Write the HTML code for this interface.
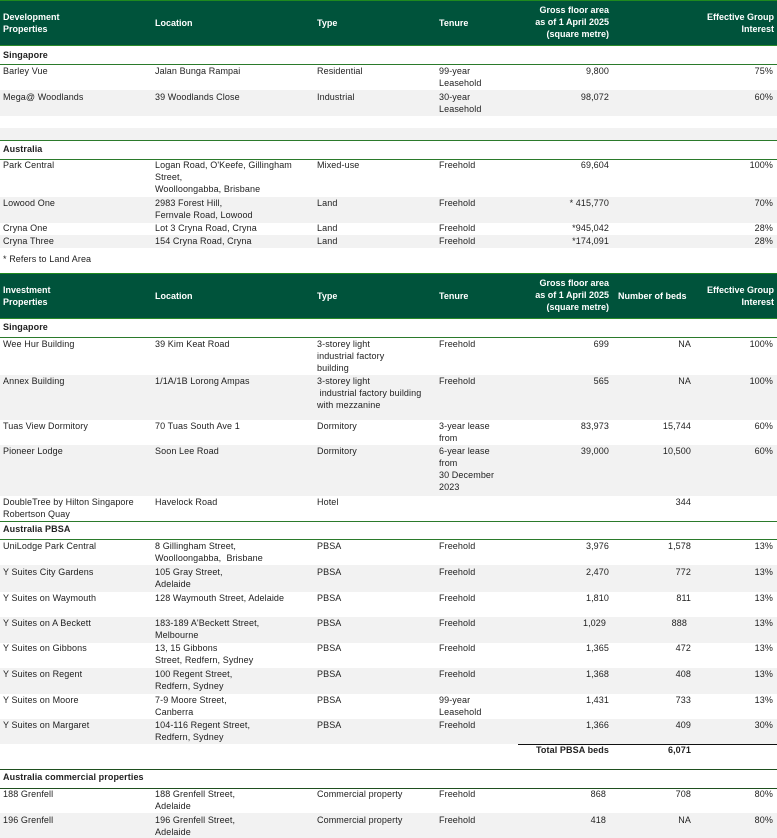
<!DOCTYPE html>
<html><head><meta charset="utf-8"><style>
*{margin:0;padding:0;box-sizing:border-box}
body{width:777px;height:838px;position:relative;background:#fff;font-family:"Liberation Sans",Arial,sans-serif;font-size:9px;color:#222;overflow:hidden}
div{position:absolute}
.t{line-height:12px;white-space:nowrap;letter-spacing:0.1px}
.r{text-align:right}
.b{font-weight:bold}
.h{background:#00533b;color:#fff;font-weight:bold}
.hl{color:#fff;font-weight:bold;line-height:12px;white-space:nowrap}
.g{background:#f2f2f2;left:0;width:777px}
.ln{left:0;width:777px;height:1px;background:#2b7a2b}
</style></head><body>

<!-- Header 1 -->
<div class="h" style="left:0;top:0;width:777px;height:46px"></div>
<div style="left:0;top:0;width:153px;height:1px;background:#1f8a1f"></div>
<div style="left:128px;top:0;width:649px;height:1px;background:#1f8a1f"></div>
<div style="left:0;top:45px;width:777px;height:1px;background:#2b8a2b"></div>
<div class="hl" style="left:3px;top:11px">Development<br>Properties</div>
<div class="hl" style="left:155px;top:17px">Location</div>
<div class="hl" style="left:317px;top:17px">Type</div>
<div class="hl" style="left:439px;top:17px">Tenure</div>
<div class="hl r" style="right:168px;top:4px">Gross floor area<br>as of 1 April 2025<br>(square metre)</div>
<div class="hl r" style="right:3px;top:11px">Effective Group<br>Interest</div>

<div class="t b" style="left:3px;top:49px">Singapore</div>
<div class="ln" style="top:64px"></div>

<div class="t" style="left:3px;top:65px">Barley Vue</div>
<div class="t" style="left:155px;top:65px">Jalan Bunga Rampai</div>
<div class="t" style="left:317px;top:65px">Residential</div>
<div class="t" style="left:439px;top:65px">99-year<br>Leasehold</div>
<div class="t r" style="right:168px;top:65px">9,800</div>
<div class="t r" style="right:4px;top:65px">75%</div>

<div class="g" style="top:90px;height:26px"></div>
<div class="t" style="left:3px;top:91px">Mega@ Woodlands</div>
<div class="t" style="left:155px;top:91px">39 Woodlands Close</div>
<div class="t" style="left:317px;top:91px">Industrial</div>
<div class="t" style="left:439px;top:91px">30-year<br>Leasehold</div>
<div class="t r" style="right:168px;top:91px">98,072</div>
<div class="t r" style="right:4px;top:91px">60%</div>

<div class="g" style="top:128px;height:12px"></div>
<div class="ln" style="top:140px"></div>
<div class="t b" style="left:3px;top:143px">Australia</div>
<div class="ln" style="top:159px"></div>

<div class="t" style="left:3px;top:159px">Park Central</div>
<div class="t" style="left:155px;top:159px">Logan Road, O'Keefe, Gillingham<br>Street,<br>Woolloongabba, Brisbane</div>
<div class="t" style="left:317px;top:159px">Mixed-use</div>
<div class="t" style="left:439px;top:159px">Freehold</div>
<div class="t r" style="right:168px;top:159px">69,604</div>
<div class="t r" style="right:4px;top:159px">100%</div>

<div class="g" style="top:197px;height:26px"></div>
<div class="t" style="left:3px;top:197px">Lowood One</div>
<div class="t" style="left:155px;top:197px">2983 Forest Hill,<br>Fernvale Road, Lowood</div>
<div class="t" style="left:317px;top:197px">Land</div>
<div class="t" style="left:439px;top:197px">Freehold</div>
<div class="t r" style="right:168px;top:197px">* 415,770</div>
<div class="t r" style="right:4px;top:197px">70%</div>

<div class="t" style="left:3px;top:222px">Cryna One</div>
<div class="t" style="left:155px;top:222px">Lot 3 Cryna Road, Cryna</div>
<div class="t" style="left:317px;top:222px">Land</div>
<div class="t" style="left:439px;top:222px">Freehold</div>
<div class="t r" style="right:168px;top:222px">*945,042</div>
<div class="t r" style="right:4px;top:222px">28%</div>

<div class="g" style="top:235px;height:13px"></div>
<div class="t" style="left:3px;top:235px">Cryna Three</div>
<div class="t" style="left:155px;top:235px">154 Cryna Road, Cryna</div>
<div class="t" style="left:317px;top:235px">Land</div>
<div class="t" style="left:439px;top:235px">Freehold</div>
<div class="t r" style="right:168px;top:235px">*174,091</div>
<div class="t r" style="right:4px;top:235px">28%</div>

<div class="t" style="left:3px;top:253px">* Refers to Land Area</div>

<!-- Header 2 -->
<div class="h" style="left:0;top:273px;width:777px;height:46px"></div>
<div style="left:0;top:273px;width:777px;height:1px;background:#1f8a1f"></div>
<div style="left:0;top:318px;width:777px;height:1px;background:#2b8a2b"></div>
<div class="hl" style="left:3px;top:284px">Investment<br>Properties</div>
<div class="hl" style="left:155px;top:290px">Location</div>
<div class="hl" style="left:317px;top:290px">Type</div>
<div class="hl" style="left:439px;top:290px">Tenure</div>
<div class="hl r" style="right:168px;top:277px">Gross floor area<br>as of 1 April 2025<br>(square metre)</div>
<div class="hl" style="left:618px;top:290px">Number of beds</div>
<div class="hl r" style="right:3px;top:284px">Effective Group<br>Interest</div>

<div class="t b" style="left:3px;top:321px">Singapore</div>
<div class="ln" style="top:337px"></div>

<div class="t" style="left:3px;top:338px">Wee Hur Building</div>
<div class="t" style="left:155px;top:338px">39 Kim Keat Road</div>
<div class="t" style="left:317px;top:338px">3-storey light<br>industrial factory<br>building</div>
<div class="t" style="left:439px;top:338px">Freehold</div>
<div class="t r" style="right:168px;top:338px">699</div>
<div class="t r" style="right:86px;top:338px">NA</div>
<div class="t r" style="right:4px;top:338px">100%</div>

<div class="g" style="top:375px;height:45px"></div>
<div class="t" style="left:3px;top:375px">Annex Building</div>
<div class="t" style="left:155px;top:375px">1/1A/1B Lorong Ampas</div>
<div class="t" style="left:317px;top:375px">3-storey light<br>&nbsp;industrial factory building<br>with mezzanine</div>
<div class="t" style="left:439px;top:375px">Freehold</div>
<div class="t r" style="right:168px;top:375px">565</div>
<div class="t r" style="right:86px;top:375px">NA</div>
<div class="t r" style="right:4px;top:375px">100%</div>

<div class="t" style="left:3px;top:420px">Tuas View Dormitory</div>
<div class="t" style="left:155px;top:420px">70 Tuas South Ave 1</div>
<div class="t" style="left:317px;top:420px">Dormitory</div>
<div class="t" style="left:439px;top:420px">3-year lease<br>from</div>
<div class="t r" style="right:168px;top:420px">83,973</div>
<div class="t r" style="right:86px;top:420px">15,744</div>
<div class="t r" style="right:4px;top:420px">60%</div>

<div class="g" style="top:445px;height:51px"></div>
<div class="t" style="left:3px;top:445px">Pioneer Lodge</div>
<div class="t" style="left:155px;top:445px">Soon Lee Road</div>
<div class="t" style="left:317px;top:445px">Dormitory</div>
<div class="t" style="left:439px;top:445px">6-year lease<br>from<br>30 December<br>2023</div>
<div class="t r" style="right:168px;top:445px">39,000</div>
<div class="t r" style="right:86px;top:445px">10,500</div>
<div class="t r" style="right:4px;top:445px">60%</div>

<div class="t" style="left:3px;top:496px">DoubleTree by Hilton Singapore<br>Robertson Quay</div>
<div class="t" style="left:155px;top:496px">Havelock Road</div>
<div class="t" style="left:317px;top:496px">Hotel</div>
<div class="t r" style="right:86px;top:496px">344</div>

<div class="ln" style="top:521px"></div>
<div class="t b" style="left:3px;top:523px">Australia PBSA</div>
<div class="ln" style="top:539px"></div>

<div class="t" style="left:3px;top:540px">UniLodge Park Central</div>
<div class="t" style="left:155px;top:540px">8 Gillingham Street,<br>Woolloongabba,&nbsp; Brisbane</div>
<div class="t" style="left:317px;top:540px">PBSA</div>
<div class="t" style="left:439px;top:540px">Freehold</div>
<div class="t r" style="right:168px;top:540px">3,976</div>
<div class="t r" style="right:86px;top:540px">1,578</div>
<div class="t r" style="right:4px;top:540px">13%</div>

<div class="g" style="top:565px;height:27px"></div>
<div class="t" style="left:3px;top:566px">Y Suites City Gardens</div>
<div class="t" style="left:155px;top:566px">105 Gray Street,<br>Adelaide</div>
<div class="t" style="left:317px;top:566px">PBSA</div>
<div class="t" style="left:439px;top:566px">Freehold</div>
<div class="t r" style="right:168px;top:566px">2,470</div>
<div class="t r" style="right:86px;top:566px">772</div>
<div class="t r" style="right:4px;top:566px">13%</div>

<div class="t" style="left:3px;top:592px">Y Suites on Waymouth</div>
<div class="t" style="left:155px;top:592px">128 Waymouth Street, Adelaide</div>
<div class="t" style="left:317px;top:592px">PBSA</div>
<div class="t" style="left:439px;top:592px">Freehold</div>
<div class="t r" style="right:168px;top:592px">1,810</div>
<div class="t r" style="right:86px;top:592px">811</div>
<div class="t r" style="right:4px;top:592px">13%</div>

<div class="g" style="top:617px;height:26px"></div>
<div class="t" style="left:3px;top:617px">Y Suites on A Beckett</div>
<div class="t" style="left:155px;top:617px">183-189 A'Beckett Street,<br>Melbourne</div>
<div class="t" style="left:317px;top:617px">PBSA</div>
<div class="t" style="left:439px;top:617px">Freehold</div>
<div class="t r" style="right:171px;top:617px">1,029</div>
<div class="t r" style="right:90px;top:617px">888</div>
<div class="t r" style="right:4px;top:617px">13%</div>

<div class="t" style="left:3px;top:642px">Y Suites on Gibbons</div>
<div class="t" style="left:155px;top:642px">13, 15 Gibbons<br>Street, Redfern, Sydney</div>
<div class="t" style="left:317px;top:642px">PBSA</div>
<div class="t" style="left:439px;top:642px">Freehold</div>
<div class="t r" style="right:168px;top:642px">1,365</div>
<div class="t r" style="right:86px;top:642px">472</div>
<div class="t r" style="right:4px;top:642px">13%</div>

<div class="g" style="top:668px;height:26px"></div>
<div class="t" style="left:3px;top:668px">Y Suites on Regent</div>
<div class="t" style="left:155px;top:668px">100 Regent Street,<br>Redfern, Sydney</div>
<div class="t" style="left:317px;top:668px">PBSA</div>
<div class="t" style="left:439px;top:668px">Freehold</div>
<div class="t r" style="right:168px;top:668px">1,368</div>
<div class="t r" style="right:86px;top:668px">408</div>
<div class="t r" style="right:4px;top:668px">13%</div>

<div class="t" style="left:3px;top:694px">Y Suites on Moore</div>
<div class="t" style="left:155px;top:694px">7-9 Moore Street,<br>Canberra</div>
<div class="t" style="left:317px;top:694px">PBSA</div>
<div class="t" style="left:439px;top:694px">99-year<br>Leasehold</div>
<div class="t r" style="right:168px;top:694px">1,431</div>
<div class="t r" style="right:86px;top:694px">733</div>
<div class="t r" style="right:4px;top:694px">13%</div>

<div class="g" style="top:719px;height:25px"></div>
<div class="t" style="left:3px;top:719px">Y Suites on Margaret</div>
<div class="t" style="left:155px;top:719px">104-116 Regent Street,<br>Redfern, Sydney</div>
<div class="t" style="left:317px;top:719px">PBSA</div>
<div class="t" style="left:439px;top:719px">Freehold</div>
<div class="t r" style="right:168px;top:719px">1,366</div>
<div class="t r" style="right:86px;top:719px">409</div>
<div class="t r" style="right:4px;top:719px">30%</div>

<div style="left:518px;top:744px;width:259px;height:1px;background:#111"></div>
<div class="t b r" style="right:168px;top:744px">Total PBSA beds</div>
<div class="t b r" style="right:86px;top:744px">6,071</div>

<div class="ln" style="top:769px;background:#1f4f1f"></div>
<div class="t b" style="left:3px;top:771px">Australia commercial properties</div>
<div class="ln" style="top:788px;background:#1f4f1f"></div>

<div class="t" style="left:3px;top:788px">188 Grenfell</div>
<div class="t" style="left:155px;top:788px">188 Grenfell Street,<br>Adelaide</div>
<div class="t" style="left:317px;top:788px">Commercial property</div>
<div class="t" style="left:439px;top:788px">Freehold</div>
<div class="t r" style="right:171px;top:788px">868</div>
<div class="t r" style="right:86px;top:788px">708</div>
<div class="t r" style="right:4px;top:788px">80%</div>

<div class="g" style="top:813px;height:25px"></div>
<div class="t" style="left:3px;top:814px">196 Grenfell</div>
<div class="t" style="left:155px;top:814px">196 Grenfell Street,<br>Adelaide</div>
<div class="t" style="left:317px;top:814px">Commercial property</div>
<div class="t" style="left:439px;top:814px">Freehold</div>
<div class="t r" style="right:171px;top:814px">418</div>
<div class="t r" style="right:86px;top:814px">NA</div>
<div class="t r" style="right:4px;top:814px">80%</div>

</body></html>
